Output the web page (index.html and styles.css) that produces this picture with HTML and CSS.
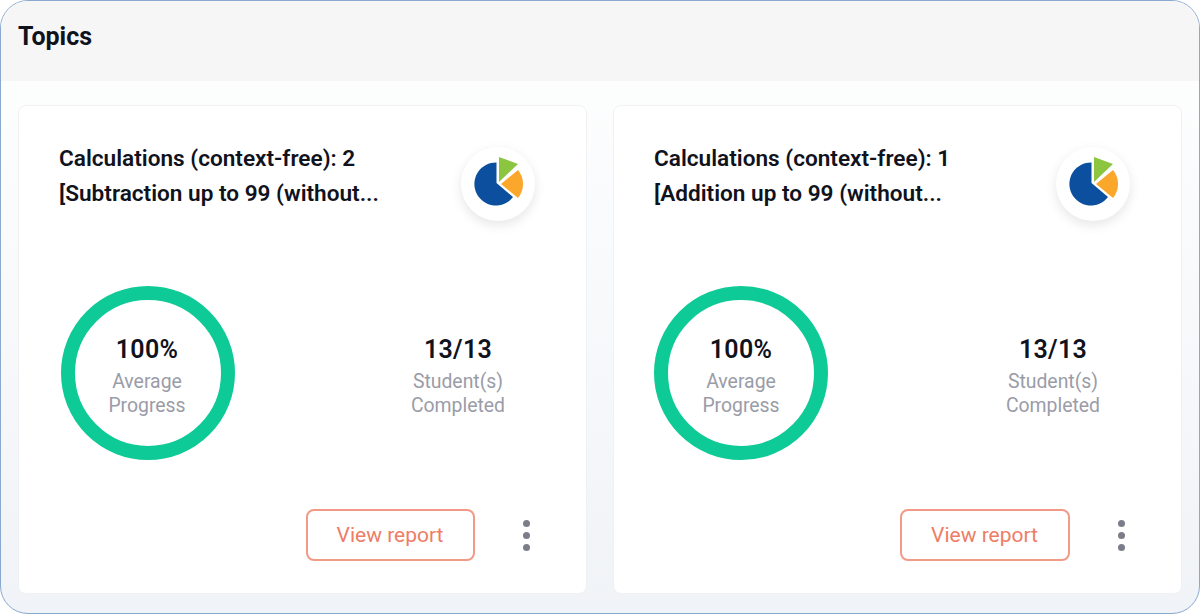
FILE: index.html
```html
<!DOCTYPE html>
<html lang="en">
<head>
  <meta charset="UTF-8" />
  <meta name="viewport" content="width=device-width, initial-scale=1.0" />
  <title>Topics</title>
  <link rel="stylesheet" href="styles.css">
</head>
<body>
<div class="frame">
  <div class="header">
    <h1>Topics</h1>
  </div>

  <div class="cards">
    <!-- Card 1 -->
    <div class="card">
      <div class="card-top">
        <h2>Calculations (context-free): 2<br>[Subtraction up to 99 (without...</h2>
        <div class="pie-badge">
          <svg viewBox="0 0 74 74" width="74" height="74">
            <path fill="#0b4f9e" d="M35.5 15.5A21.5 21.5 0 1 0 52 50L35.5 36Z"/>
            <path fill="#8cc540" d="M38 10L57 17L38 35Z"/>
            <path fill="#fba72b" d="M40 37L57 23A22 22 0 0 1 57 51Z"/>
          </svg>
        </div>
      </div>
      <div class="card-stats">
        <div class="ring">
          <div class="big">100%</div>
          <div class="label">Average<br>Progress</div>
        </div>
        <div class="stat">
          <div class="big">13/13</div>
          <div class="label">Student(s)<br>Completed</div>
        </div>
      </div>
      <div class="card-foot">
        <button class="button">View report</button>
        <div class="dots"><span></span><span></span><span></span></div>
      </div>
    </div>

    <!-- Card 2 -->
    <div class="card">
      <div class="card-top">
        <h2>Calculations (context-free): 1<br>[Addition up to 99 (without...</h2>
        <div class="pie-badge">
          <svg viewBox="0 0 74 74" width="74" height="74">
            <path fill="#0b4f9e" d="M35.5 15.5A21.5 21.5 0 1 0 52 50L35.5 36Z"/>
            <path fill="#8cc540" d="M38 10L57 17L38 35Z"/>
            <path fill="#fba72b" d="M40 37L57 23A22 22 0 0 1 57 51Z"/>
          </svg>
        </div>
      </div>
      <div class="card-stats">
        <div class="ring">
          <div class="big">100%</div>
          <div class="label">Average<br>Progress</div>
        </div>
        <div class="stat">
          <div class="big">13/13</div>
          <div class="label">Student(s)<br>Completed</div>
        </div>
      </div>
      <div class="card-foot">
        <button class="button">View report</button>
        <div class="dots"><span></span><span></span><span></span></div>
      </div>
    </div>
  </div>
</div>
</body>
</html>
```

FILE: styles.css
```css
* {
  box-sizing: border-box;
}
html, body {
  height: 100%;
}
body {
  margin: 0;
  font-family: Roboto, sans-serif;
  background: #fff;
  overflow: hidden;
}
.frame {
  height: 614px;
  border: 1px solid #8aa9cf;
  border-radius: 28px;
  overflow: hidden;
  display: flex;
  flex-direction: column;
  background: linear-gradient(#fff, #f0f3f7);
}
.header {
  height: 80px;
  flex: none;
  padding: 20px 17px 0;
  background: #f6f6f7;
}
h1 {
  margin: 0;
  font-size: 25px;
  line-height: 32px;
  font-weight: 700;
  color: #10121c;
}
.cards {
  flex: 1;
  display: grid;
  grid-template-columns: 568.5px 568.5px;
  gap: 26.5px;
  padding: 24px 17px 19px 17px;
}
.card {
  background: #fff;
  border: 1px solid #f0f1f3;
  border-radius: 8px;
  display: flex;
  flex-direction: column;
}
.card-top {
  display: flex;
  justify-content: space-between;
  padding: 35px 51px 0 40px;
  height: 180px;
}
h2 {
  margin: 0;
  font-size: 22.6px;
  line-height: 35px;
  font-weight: 600;
  color: #10121c;
  white-space: nowrap;
}
.pie-badge {
  width: 74px;
  height: 74px;
  margin-top: 6px;
  border-radius: 50%;
  background: #fff;
  box-shadow: 0 4px 12px rgba(0,0,0,0.1);
}
.card-stats {
  display: flex;
  align-items: center;
  padding-left: 42px;
}
.ring {
  width: 174px;
  height: 174px;
  padding: 6px 2px 0 0;
  border: 14px solid #0dca96;
  border-radius: 50%;
  display: flex;
  flex-direction: column;
  align-items: center;
  justify-content: center;
  text-align: center;
}
.stat {
  width: 140px;
  margin-left: 153px;
  padding-top: 6px;
  text-align: center;
}
.card + .card .ring {
  margin: 0 2px 0 -2px;
  padding-right: 0;
}
.big {
  font-size: 25px;
  line-height: 30px;
  font-weight: 600;
  color: #10121c;
  letter-spacing: 0.3px;
}
.label {
  margin-top: 5px;
  font-size: 19.4px;
  line-height: 24px;
  color: #9a9ca8;
}
.card-foot {
  display: flex;
  align-items: center;
  justify-content: flex-end;
  padding: 49px 56px 0 0;
}
.button {
  width: 169px;
  height: 52px;
  padding: 0;
  font-family: Roboto, sans-serif;
  font-size: 21px;
  background-color: #fff;
  color: #ee7d66;
  border: 2px solid #f29a88;
  border-radius: 8px;
  cursor: pointer;
}
.card + .card .button {
  width: 170px;
}
.dots {
  margin-left: 48px;
  display: flex;
  flex-direction: column;
  gap: 5px;
}
.dots span {
  width: 7px;
  height: 7px;
  border-radius: 50%;
  background: #7b7d8a;
}
```
